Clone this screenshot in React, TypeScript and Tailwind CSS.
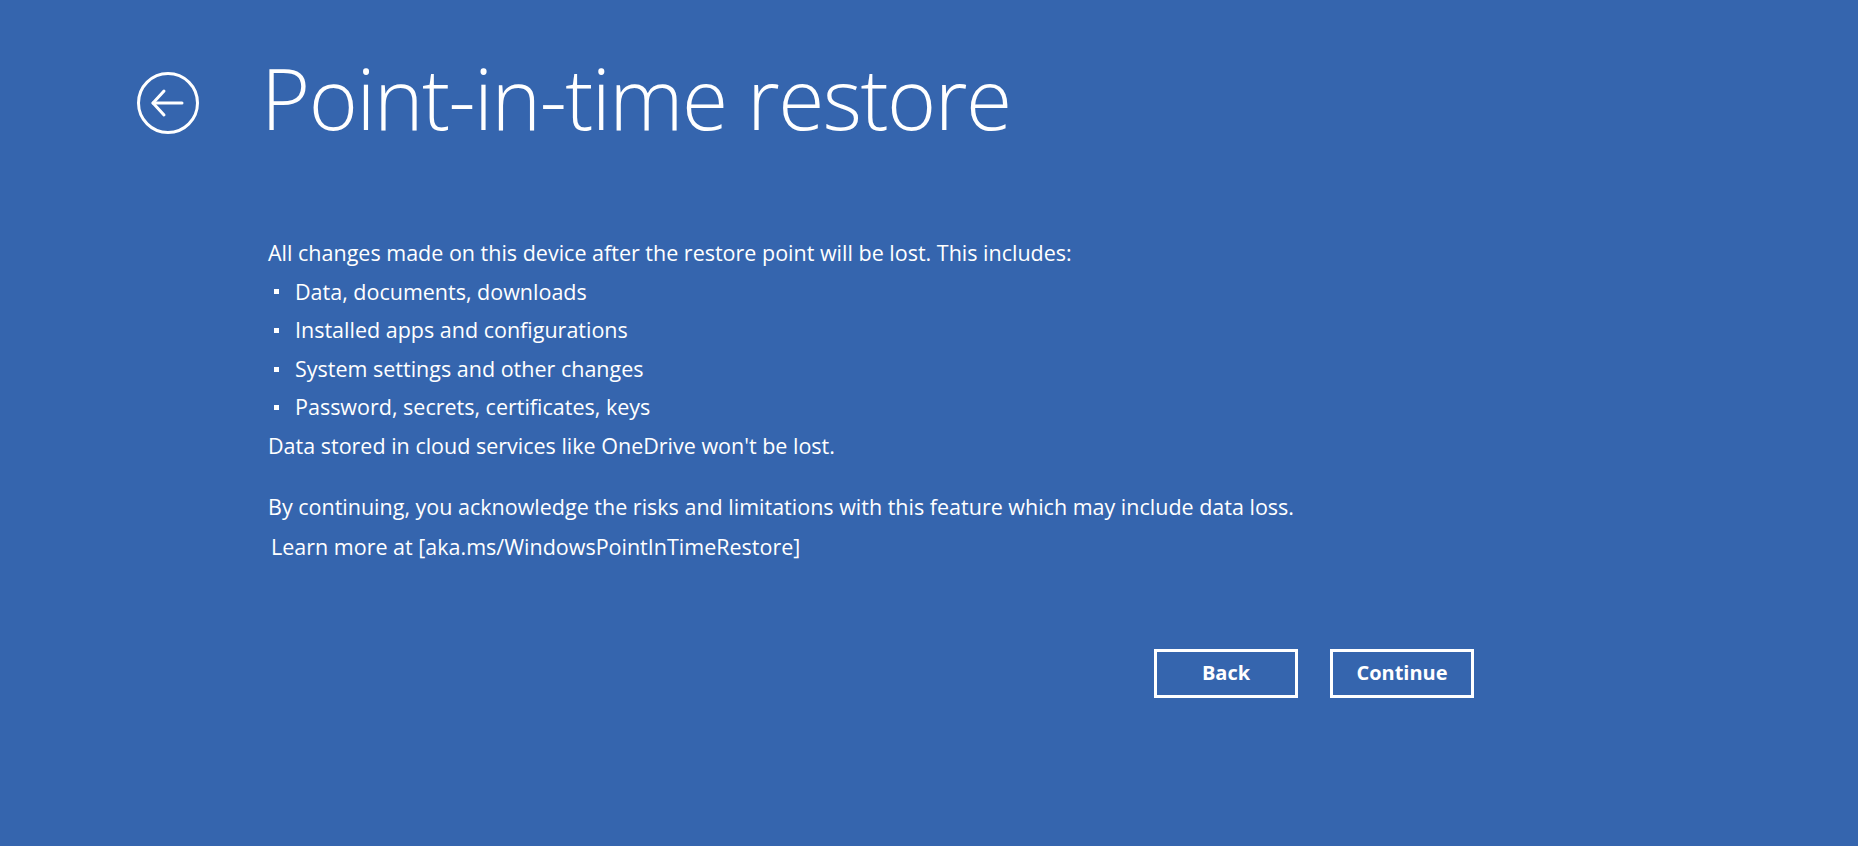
import React from 'react';

const BackCircle: React.FC = () => (
  <svg className="mt-[15px] shrink-0" width="64" height="64" viewBox="0 0 64 64" fill="none" stroke="white" strokeWidth="3" strokeLinecap="round" strokeLinejoin="round">
    <circle cx="32" cy="32" r="29.5" />
    <path d="M17 32h29" />
    <path d="M28 20L17 32l11 12" />
  </svg>
);

const items = [
  'Data, documents, downloads',
  'Installed apps and configurations',
  'System settings and other changes',
  'Password, secrets, certificates, keys',
];

export default function App() {
  return (
    <div
      className="w-full h-screen bg-[#3565ae] text-white overflow-hidden"
      style={{ fontFamily: '"Open Sans", "Noto Sans", sans-serif' }}
    >
      {/* Header */}
      <div className="flex items-start pl-[136px] pt-[56px]">
        <BackCircle />
        <h1 className="ml-[61px] text-[84px] font-light leading-none tracking-[-1.5px]">Point-in-time restore</h1>
      </div>

      {/* Body */}
      <div className="pl-[268px] pt-[94px] text-[21.5px] leading-[38.6px]">
        <p>All changes made on this device after the restore point will be lost. This includes:</p>
        <ul>
          {items.map((t) => (
            <li key={t} className="flex items-center">
              <span className="w-[27px] pl-[6px] flex items-center">
                <span className="block w-[5px] h-[5px] bg-white" />
              </span>
              <span>{t}</span>
            </li>
          ))}
        </ul>
        <p>Data stored in cloud services like OneDrive won't be lost.</p>
        <p className="mt-[22px]">By continuing, you acknowledge the risks and limitations with this feature which may include data loss.</p>
        <p className="pl-[3px] mt-[2px]">Learn more at [aka.ms/WindowsPointInTimeRestore]</p>
      </div>

      {/* Buttons */}
      <div className="flex gap-[32px] pl-[1154px] pt-[82px]">
        <button className="w-[144px] h-[49px] border-[3px] border-white text-[20px] font-bold">Back</button>
        <button className="w-[144px] h-[49px] border-[3px] border-white text-[20px] font-bold">Continue</button>
      </div>
    </div>
  );
}
